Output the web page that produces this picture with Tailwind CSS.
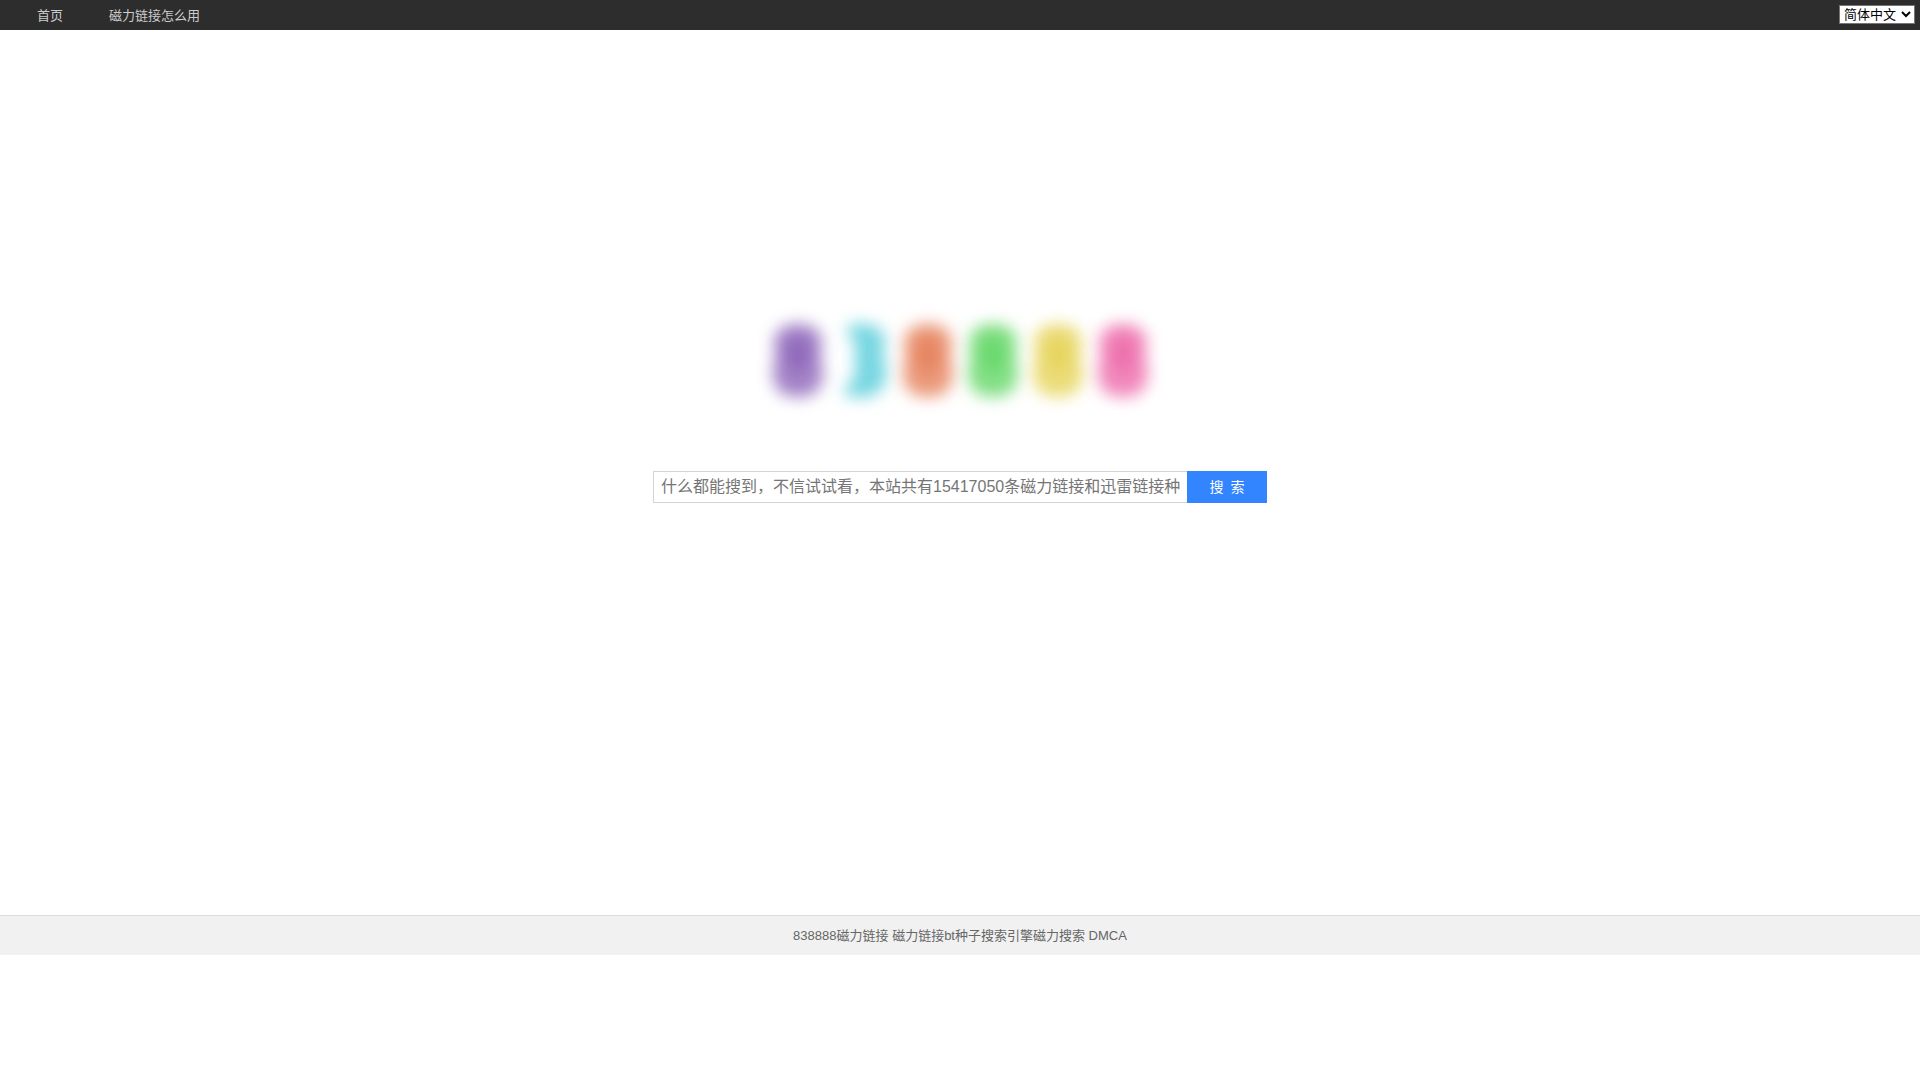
<!DOCTYPE html>
<html lang="zh-CN">
<head>
  <meta charset="UTF-8" />
  <meta name="viewport" content="width=device-width, initial-scale=1.0" />
  <title>838888磁力链接</title>
  <script src="https://cdn.jsdelivr.net/npm/@tailwindcss/browser@4"></script>
  <style>
    html { font-family: 'Liberation Sans', 'Noto Sans CJK SC', sans-serif; }
  </style>
</head>
<body class="bg-white text-[13px] text-[#666]">
  <header class="flex h-[30px] items-start justify-between bg-[#2d2d2d] pr-[5px] pl-[37px]">
    <nav class="flex gap-[46px] leading-8 text-[#ccc]">
      <a href="#" class="hover:text-white">首页</a>
      <a href="#" class="hover:text-white">磁力链接怎么用</a>
    </nav>
    <select aria-label="语言" class="mt-[5px] h-[19px] w-[76px] appearance-auto border border-[#767676] bg-white text-[13px] text-black">
      <option>简体中文</option>
      <option>繁體中文</option>
      <option>English</option>
    </select>
  </header>

  <main class="flex flex-col items-center pt-[260px] pb-[412px]">
    <!-- logo -->
    <svg role="img" aria-label="838888" viewBox="0 0 420 140" class="mb-[41px] h-[140px] w-[420px]">
      <defs>
        <filter id="soft" x="-60%" y="-40%" width="220%" height="180%">
          <feGaussianBlur stdDeviation="8" />
        </filter>
        <filter id="core" x="-100%" y="-100%" width="300%" height="300%">
          <feGaussianBlur stdDeviation="8" />
        </filter>
        <g id="eight">
          <path d="M0 -36C16 -36 24 -28 24 -17C24 -10 22 -6 22 -3C24 1 25 6 25 14C25 29 16 37 0 37C-16 37 -25 29 -25 14C-25 6 -24 1 -22 -3C-22 -6 -24 -10 -24 -17C-24 -28 -16 -36 0 -36Z" opacity="0.74" filter="url(#soft)" />
          <ellipse cy="-6" rx="11" ry="18" opacity="0.65" filter="url(#core)" />
        </g>
      </defs>
      <use href="#eight" x="48" y="70" fill="#8458b4" />
      <path d="M98 35C124 30 136 40 135 53C135 59 134 62 132 66C136 72 137 78 136 86C135 102 122 111 95 106L96 93C102 94 105 91 105 86C105 79 105 74 105 70C105 64 105 60 105 54C105 49 103 47 98 47Z" fill="#5ecfdc" opacity="0.85" filter="url(#soft)" />
      <use href="#eight" x="178" y="70" fill="#e4764e" />
      <use href="#eight" x="243" y="70" fill="#58d45c" />
      <use href="#eight" x="308" y="70" fill="#e4d04c" />
      <use href="#eight" x="373" y="70" fill="#ec60a4" />
    </svg>

    <form class="flex h-8 w-[614px] max-w-full" onsubmit="return false">
      <input type="text" aria-label="搜索" placeholder="什么都能搜到，不信试试看，本站共有15417050条磁力链接和迅雷链接种子" class="min-w-0 flex-1 border border-r-0 border-[#d4d4d4] px-[7px] text-base text-black placeholder-[#757575] outline-none" />
      <button type="submit" class="w-20 bg-[#3385ff] text-sm text-white hover:bg-[#317ef3]">搜&ensp;索</button>
    </form>
  </main>

  <footer class="h-10 border-t border-[#ddd] bg-[#f1f1f1] text-center leading-10">
    <a href="#">838888磁力链接</a>
    <a href="#">磁力链接bt种子搜索引擎磁力搜索</a>
    <a href="#">DMCA</a>
  </footer>
</body>
</html>
